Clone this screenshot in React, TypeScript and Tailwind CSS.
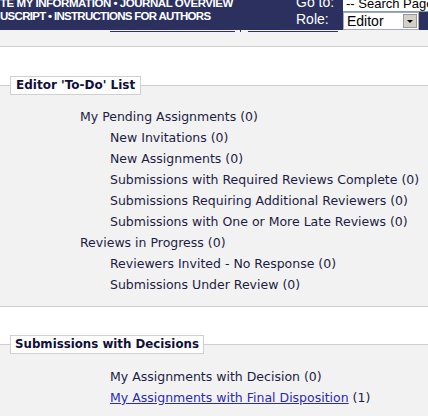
import React from "react";

// Ligne de liste : niveau 0 (titre de groupe) ou niveau 1 (sous-élément)
function Item({ label, count, level }: { label: string; count: number; level: 0 | 1 }) {
  return (
    <div className={`h-[21px] flex items-center ${level === 0 ? "pl-[80px]" : "pl-[110px]"}`}>
      {label} ({count})
    </div>
  );
}

export default function App() {
  return (
    <div
      className="w-[428px] h-[416px] overflow-hidden bg-white text-[#1c1c44]"
      style={{ fontFamily: '"DejaVu Sans", Verdana, sans-serif' }}
    >
      {/* Barre de navigation */}
      <div className="h-[30px] bg-[#2b305f] flex overflow-hidden">
        <div className="w-[296px] shrink-0 overflow-hidden">
          <div
            className="-mt-[3px] text-white font-bold text-[11.5px] leading-[12px] whitespace-nowrap"
            style={{ fontFamily: '"Liberation Sans", Arial, sans-serif' }}
          >
            <div className="tracking-[-0.45px]">TE MY INFORMATION • JOURNAL OVERVIEW</div>
            <div className="mt-[1px] tracking-[-0.7px]">USCRIPT • INSTRUCTIONS FOR AUTHORS</div>
          </div>
        </div>
        <div
          className="w-[47px] shrink-0 text-white text-[14px] leading-[17px] -mt-[6px]"
          style={{ fontFamily: '"Liberation Sans", Arial, sans-serif' }}
        >
          <div>Go to:</div>
          <div>Role:</div>
        </div>
        <div className="flex flex-col" style={{ fontFamily: '"Liberation Sans", Arial, sans-serif' }}>
          <div className="h-[12px] w-[90px] bg-white border-b border-[#7f9db9] text-[13px] leading-[8px] pl-[3px] whitespace-nowrap overflow-hidden text-black">
            -- Search Page
          </div>
          <div className="h-[18px] w-[76px] bg-white flex items-center border border-[#a5acb5]">
            <span className="flex-1 pl-[3px] text-[14px] text-black">Editor</span>
            <span className="w-[14px] h-[14px] mr-[1px] bg-[#d4d0c8] border border-[#9a9a9a] flex items-center justify-center">
              <span className="w-0 h-0 border-l-[3px] border-r-[3px] border-t-[3px] border-l-transparent border-r-transparent border-t-black" />
            </span>
          </div>
        </div>
      </div>

      {/* Liens sous la barre (soulignements seulement) */}
      <div className="h-[17px] bg-[#f3f3f3] border-b border-[#cfcfcf] flex items-start pt-[1px]">
        <div className="ml-[110px] w-[125px] border-b border-[#2a2a9a] h-[1px]" />
        <div className="ml-[5px] w-[1px] h-[2px] -mt-[1px] bg-[#333]" />
        <div className="ml-[7px] w-[90px] border-b border-[#2a2a9a] h-[1px]" />
      </div>

      {/* Liste 'To-Do' de l'éditeur */}
      <fieldset className="mt-[29px] border-0 border-t border-b border-[#cfcfcf] bg-[#f2f2f2] p-0 pt-[12px] pb-[10px] text-[12.5px]">
        <legend className="ml-[10px] px-[5px] h-[19px] leading-[17px] bg-white border border-[#d0d0d0] font-bold text-[12px] text-[#10103a]">
          Editor 'To-Do' List
        </legend>
        <Item level={0} label="My Pending Assignments" count={0} />
        <Item level={1} label="New Invitations" count={0} />
        <Item level={1} label="New Assignments" count={0} />
        <Item level={1} label="Submissions with Required Reviews Complete" count={0} />
        <Item level={1} label="Submissions Requiring Additional Reviewers" count={0} />
        <Item level={1} label="Submissions with One or More Late Reviews" count={0} />
        <Item level={0} label="Reviews in Progress" count={0} />
        <Item level={1} label="Reviewers Invited - No Response" count={0} />
        <Item level={1} label="Submissions Under Review" count={0} />
      </fieldset>

      {/* Soumissions avec décisions */}
      <fieldset className="mt-[28px] border-0 border-t border-b border-[#cfcfcf] bg-[#f2f2f2] p-0 pt-[13px] pb-[12px] text-[12.5px]">
        <legend className="ml-[10px] px-[4px] h-[19px] leading-[17px] bg-white border border-[#d0d0d0] font-bold text-[11.8px] text-[#10103a]">
          Submissions with Decisions
        </legend>
        <Item level={1} label="My Assignments with Decision" count={0} />
        <div className="h-[21px] flex items-center pl-[110px]">
          <a href="#" className="text-[#2b2bb5] underline">
            My Assignments with Final Disposition
          </a>
          &nbsp;(1)
        </div>
      </fieldset>
    </div>
  );
}
